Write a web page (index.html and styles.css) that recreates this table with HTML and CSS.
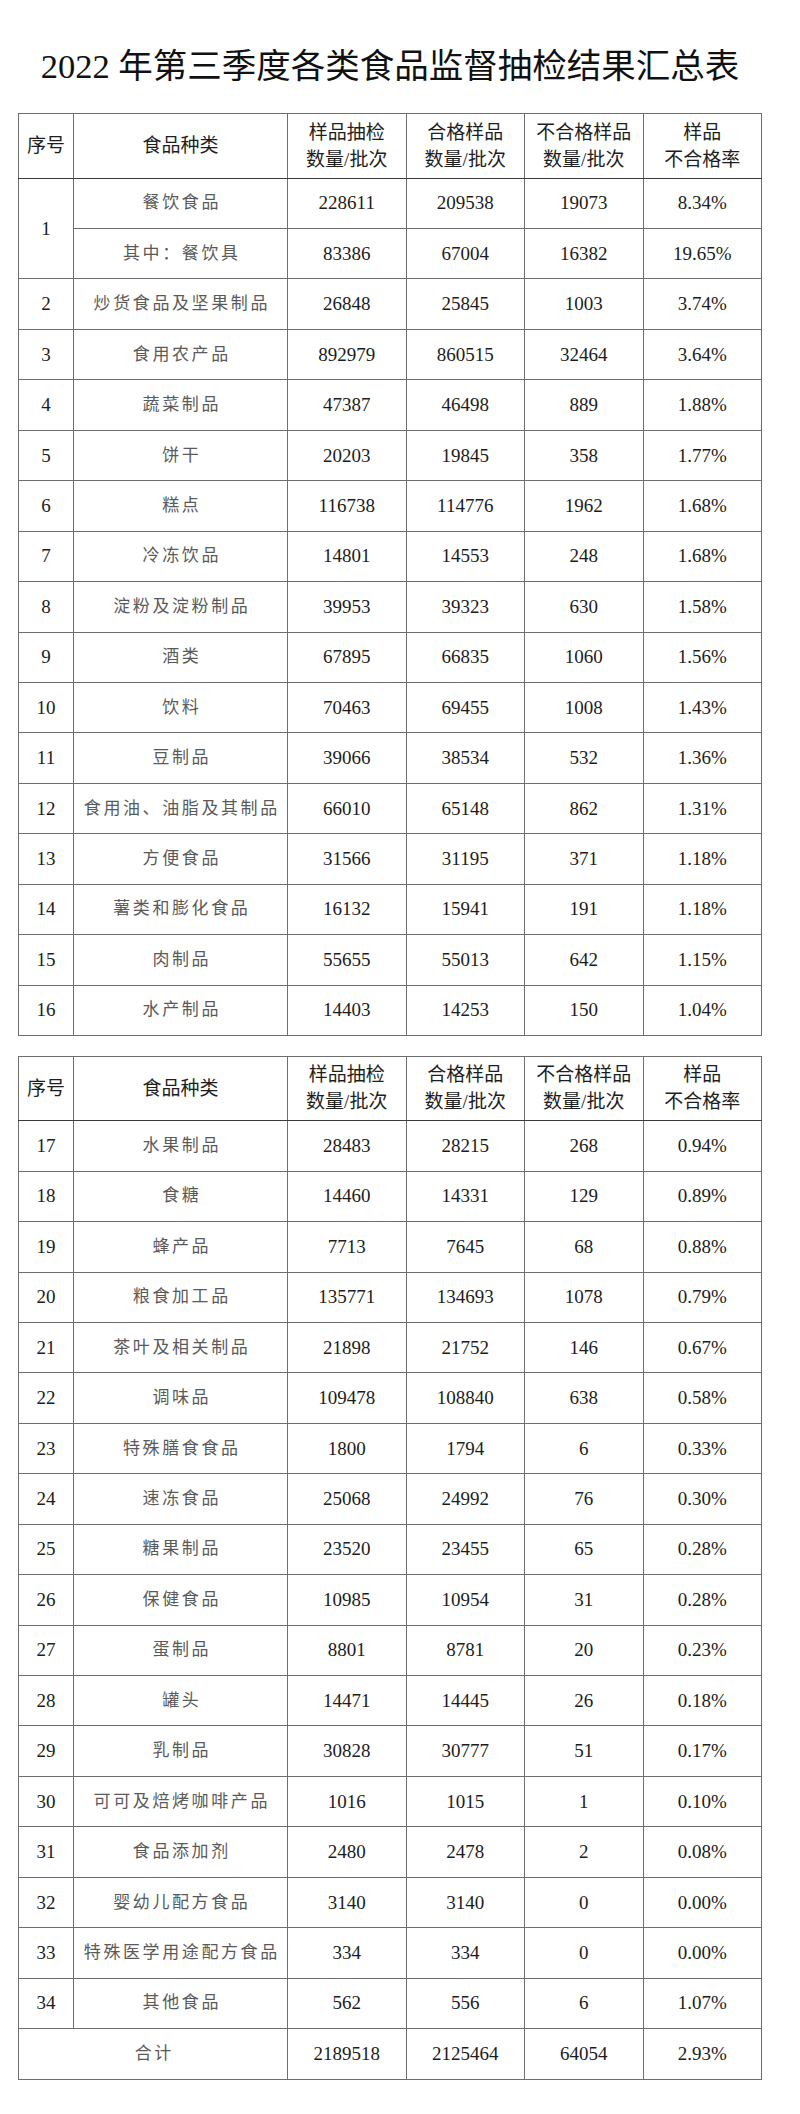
FILE: index.html
```html
<!DOCTYPE html>
<html lang="zh-CN">
<head>
<meta charset="utf-8">
<title>2022年第三季度各类食品监督抽检结果汇总表</title>
<link rel="stylesheet" href="styles.css">
</head>
<body>
<div class="page">
  <h1 class="title">2022 年第三季度各类食品监督抽检结果汇总表</h1>

  <table class="sheet">
    <colgroup>
      <col class="c-no"><col class="c-name"><col class="c-num"><col class="c-num"><col class="c-num"><col class="c-num">
    </colgroup>
    <thead>
      <tr class="head">
        <th>序号</th>
        <th>食品种类</th>
        <th>样品抽检<br>数量/批次</th>
        <th>合格样品<br>数量/批次</th>
        <th>不合格样品<br>数量/批次</th>
        <th>样品<br>不合格率</th>
      </tr>
    </thead>
    <tbody>
      <tr><td rowspan="2">1</td><td class="name">餐饮食品</td><td>228611</td><td>209538</td><td>19073</td><td>8.34%</td></tr>
      <tr><td class="name">其中：餐饮具</td><td>83386</td><td>67004</td><td>16382</td><td>19.65%</td></tr>
      <tr><td>2</td><td class="name">炒货食品及坚果制品</td><td>26848</td><td>25845</td><td>1003</td><td>3.74%</td></tr>
      <tr><td>3</td><td class="name">食用农产品</td><td>892979</td><td>860515</td><td>32464</td><td>3.64%</td></tr>
      <tr><td>4</td><td class="name">蔬菜制品</td><td>47387</td><td>46498</td><td>889</td><td>1.88%</td></tr>
      <tr><td>5</td><td class="name">饼干</td><td>20203</td><td>19845</td><td>358</td><td>1.77%</td></tr>
      <tr><td>6</td><td class="name">糕点</td><td>116738</td><td>114776</td><td>1962</td><td>1.68%</td></tr>
      <tr><td>7</td><td class="name">冷冻饮品</td><td>14801</td><td>14553</td><td>248</td><td>1.68%</td></tr>
      <tr><td>8</td><td class="name">淀粉及淀粉制品</td><td>39953</td><td>39323</td><td>630</td><td>1.58%</td></tr>
      <tr><td>9</td><td class="name">酒类</td><td>67895</td><td>66835</td><td>1060</td><td>1.56%</td></tr>
      <tr><td>10</td><td class="name">饮料</td><td>70463</td><td>69455</td><td>1008</td><td>1.43%</td></tr>
      <tr><td>11</td><td class="name">豆制品</td><td>39066</td><td>38534</td><td>532</td><td>1.36%</td></tr>
      <tr><td>12</td><td class="name">食用油、油脂及其制品</td><td>66010</td><td>65148</td><td>862</td><td>1.31%</td></tr>
      <tr><td>13</td><td class="name">方便食品</td><td>31566</td><td>31195</td><td>371</td><td>1.18%</td></tr>
      <tr><td>14</td><td class="name">薯类和膨化食品</td><td>16132</td><td>15941</td><td>191</td><td>1.18%</td></tr>
      <tr><td>15</td><td class="name">肉制品</td><td>55655</td><td>55013</td><td>642</td><td>1.15%</td></tr>
      <tr><td>16</td><td class="name">水产制品</td><td>14403</td><td>14253</td><td>150</td><td>1.04%</td></tr>
    </tbody>
  </table>

  <table class="sheet second">
    <colgroup>
      <col class="c-no"><col class="c-name"><col class="c-num"><col class="c-num"><col class="c-num"><col class="c-num">
    </colgroup>
    <thead>
      <tr class="head">
        <th>序号</th>
        <th>食品种类</th>
        <th>样品抽检<br>数量/批次</th>
        <th>合格样品<br>数量/批次</th>
        <th>不合格样品<br>数量/批次</th>
        <th>样品<br>不合格率</th>
      </tr>
    </thead>
    <tbody>
      <tr><td>17</td><td class="name">水果制品</td><td>28483</td><td>28215</td><td>268</td><td>0.94%</td></tr>
      <tr><td>18</td><td class="name">食糖</td><td>14460</td><td>14331</td><td>129</td><td>0.89%</td></tr>
      <tr><td>19</td><td class="name">蜂产品</td><td>7713</td><td>7645</td><td>68</td><td>0.88%</td></tr>
      <tr><td>20</td><td class="name">粮食加工品</td><td>135771</td><td>134693</td><td>1078</td><td>0.79%</td></tr>
      <tr><td>21</td><td class="name">茶叶及相关制品</td><td>21898</td><td>21752</td><td>146</td><td>0.67%</td></tr>
      <tr><td>22</td><td class="name">调味品</td><td>109478</td><td>108840</td><td>638</td><td>0.58%</td></tr>
      <tr><td>23</td><td class="name">特殊膳食食品</td><td>1800</td><td>1794</td><td>6</td><td>0.33%</td></tr>
      <tr><td>24</td><td class="name">速冻食品</td><td>25068</td><td>24992</td><td>76</td><td>0.30%</td></tr>
      <tr><td>25</td><td class="name">糖果制品</td><td>23520</td><td>23455</td><td>65</td><td>0.28%</td></tr>
      <tr><td>26</td><td class="name">保健食品</td><td>10985</td><td>10954</td><td>31</td><td>0.28%</td></tr>
      <tr><td>27</td><td class="name">蛋制品</td><td>8801</td><td>8781</td><td>20</td><td>0.23%</td></tr>
      <tr><td>28</td><td class="name">罐头</td><td>14471</td><td>14445</td><td>26</td><td>0.18%</td></tr>
      <tr><td>29</td><td class="name">乳制品</td><td>30828</td><td>30777</td><td>51</td><td>0.17%</td></tr>
      <tr><td>30</td><td class="name">可可及焙烤咖啡产品</td><td>1016</td><td>1015</td><td>1</td><td>0.10%</td></tr>
      <tr><td>31</td><td class="name">食品添加剂</td><td>2480</td><td>2478</td><td>2</td><td>0.08%</td></tr>
      <tr><td>32</td><td class="name">婴幼儿配方食品</td><td>3140</td><td>3140</td><td>0</td><td>0.00%</td></tr>
      <tr><td>33</td><td class="name">特殊医学用途配方食品</td><td>334</td><td>334</td><td>0</td><td>0.00%</td></tr>
      <tr><td>34</td><td class="name">其他食品</td><td>562</td><td>556</td><td>6</td><td>1.07%</td></tr>
      <tr><td colspan="2" class="name">合计</td><td>2189518</td><td>2125464</td><td>64054</td><td>2.93%</td></tr>
    </tbody>
  </table>
</div>
</body>
</html>
```

FILE: styles.css
```css
html, body {
  margin: 0;
  padding: 0;
  background: #ffffff;
}

body {
  font-family: "Liberation Serif", "Noto Sans CJK SC", serif;
  color: #1a1a1a;
}

.page {
  width: 800px;
  padding: 46px 0 36px 18px;
  box-sizing: border-box;
}

.title {
  margin: 0 0 27px 0;
  width: 744px;
  text-align: center;
  font-size: 34.5px;
  line-height: 40px;
  font-weight: 400;
  color: #111;
  white-space: nowrap;
}

.sheet {
  width: 743px;
  border-collapse: collapse;
  table-layout: fixed;
  border: 1px solid #7a7a7a;
}

.sheet.second {
  margin-top: 19.6px;
}

.c-no { width: 55px; }
.c-name { width: 214px; }
.c-num { width: 118.5px; }

.sheet th,
.sheet td {
  border: 1px solid #6e6e6e;
  padding: 0;
  text-align: center;
  vertical-align: middle;
}

.head th {
  height: 63.6px;
  font-size: 19px;
  line-height: 27px;
  font-weight: 400;
  color: #1e1e1e;
  border-bottom: 1px solid #3a3a3a;
}

.sheet td {
  height: 49.45px;
  font-size: 19px;
  line-height: 22px;
  color: #1c1c1c;
}

.sheet td.name {
  font-size: 17px;
  letter-spacing: 2.6px;
  text-indent: 2.6px;
  color: #5a5a5a;
}
```
